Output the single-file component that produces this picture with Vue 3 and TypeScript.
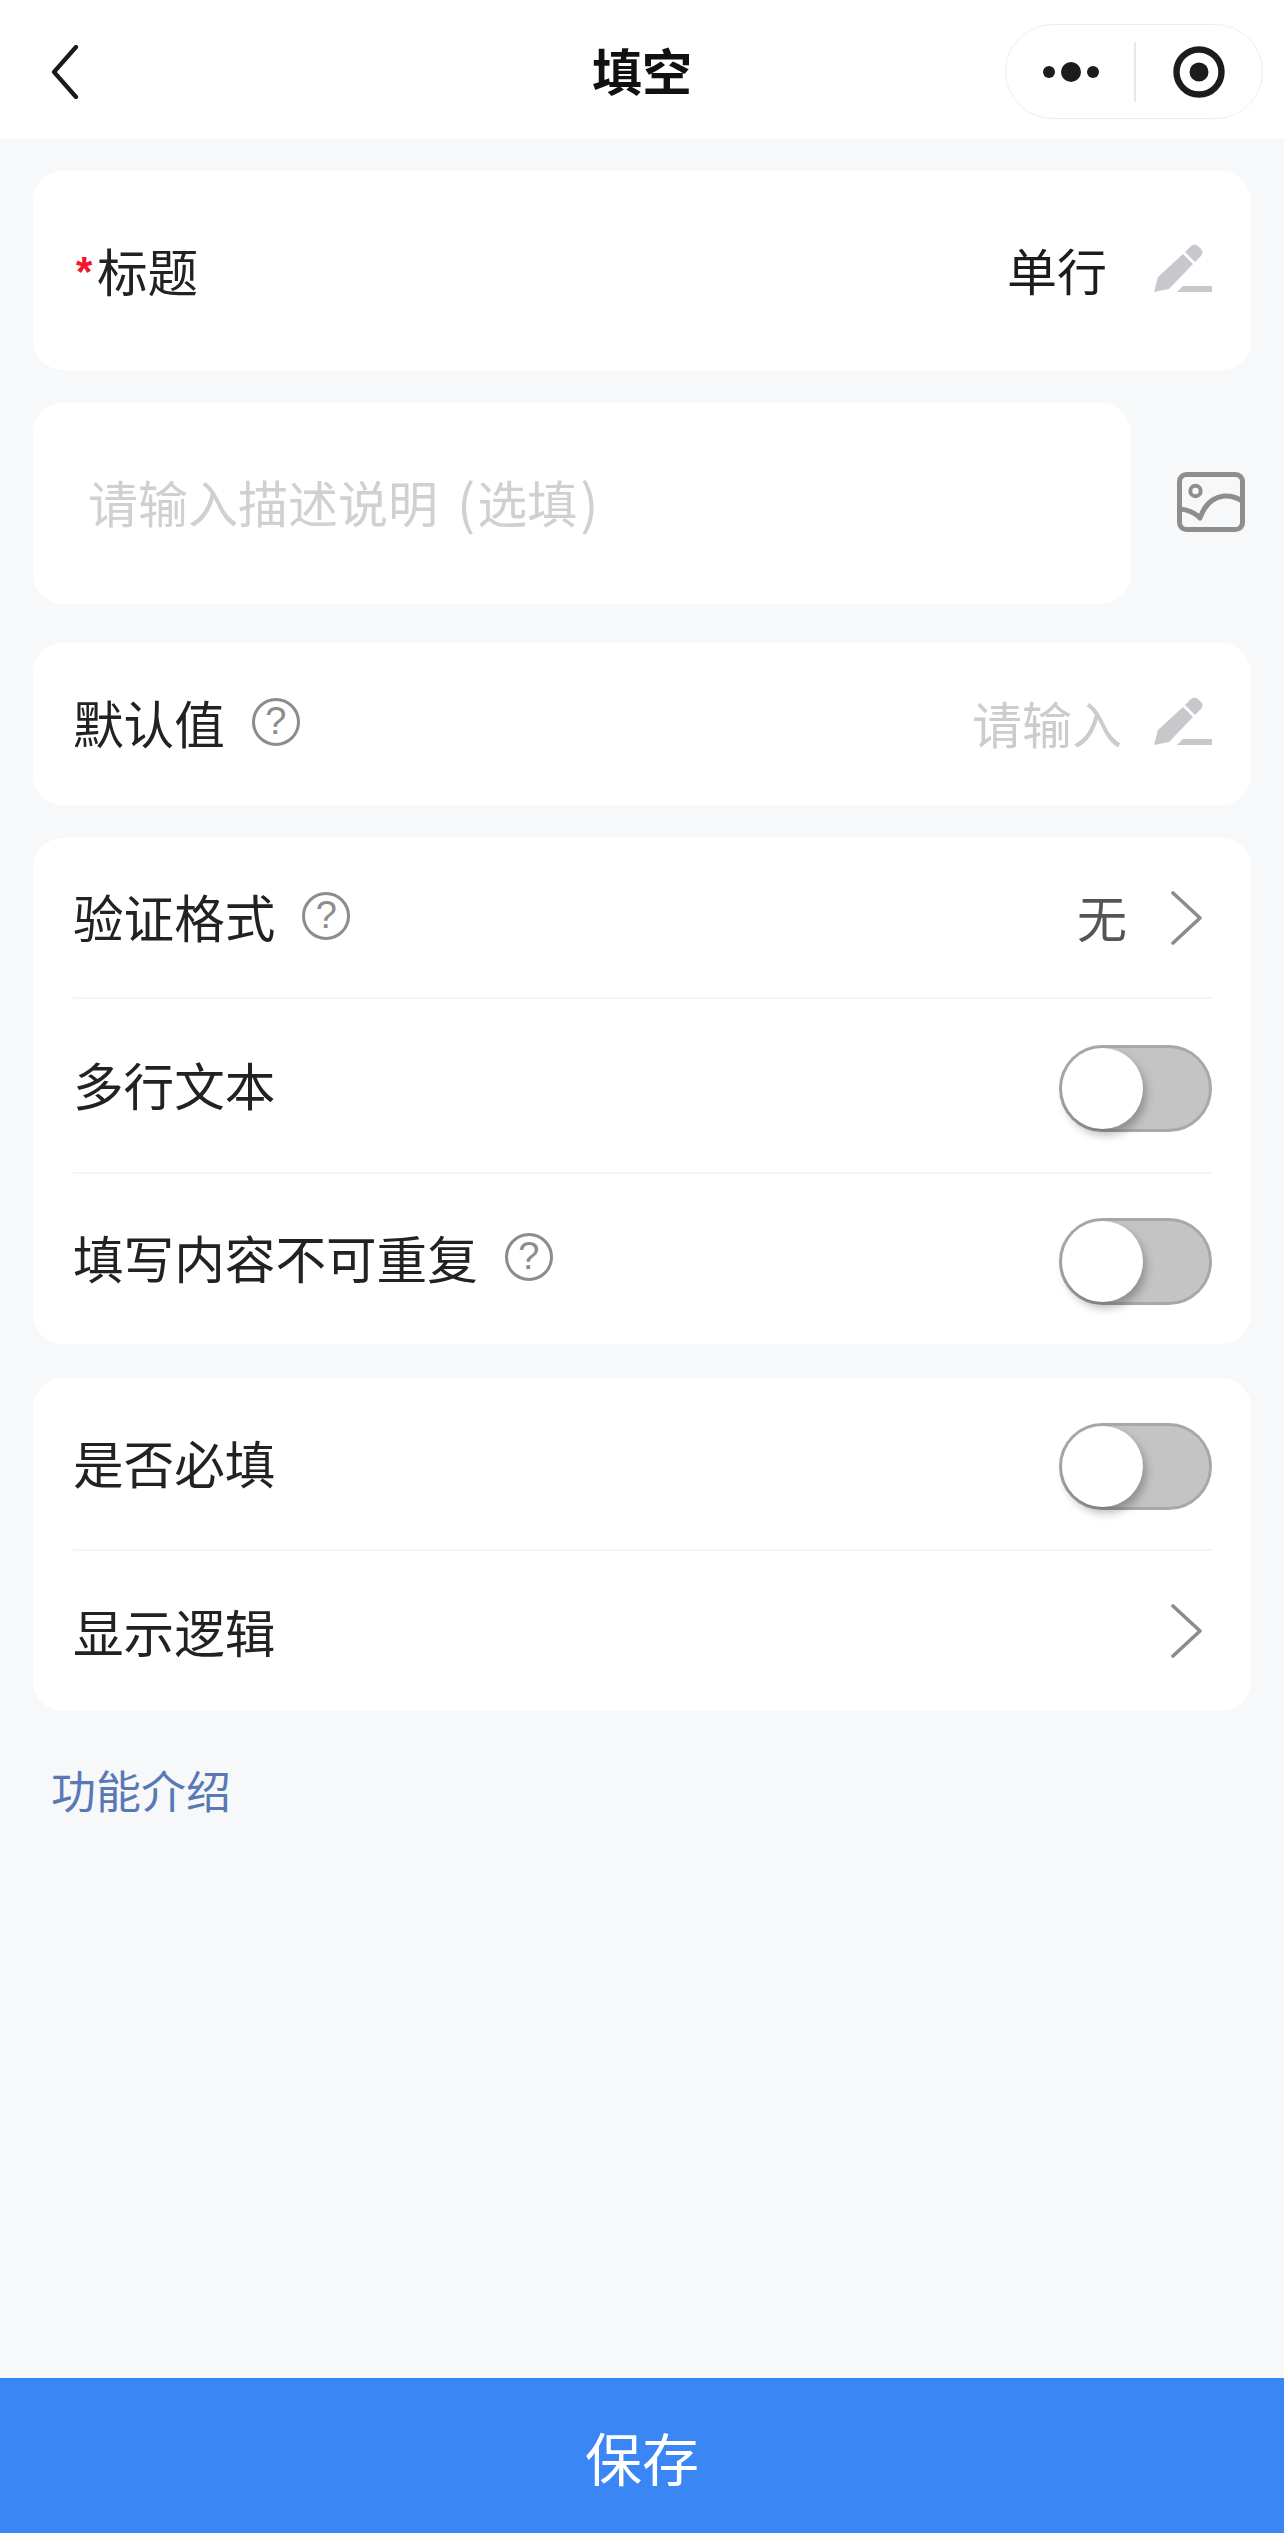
<script setup lang="ts">
const pencil = 'pencil'
</script>

<template>
  <div class="page">
    <header class="nav">
      <svg class="back" width="28" height="54" viewBox="0 0 28 54" fill="none">
        <path d="M25 2 L3 27 L25 52" stroke="#1a1a1a" stroke-width="4.2" stroke-linecap="round" stroke-linejoin="round" />
      </svg>
      <h1 class="nav-title">填空</h1>
      <div class="capsule">
        <svg width="68" height="24" viewBox="0 0 68 24">
          <circle cx="9" cy="12" r="6" fill="#1c1c1c" />
          <circle cx="31" cy="12" r="10" fill="#1c1c1c" />
          <circle cx="53" cy="12" r="6" fill="#1c1c1c" />
        </svg>
        <span class="capsule-line"></span>
        <svg width="52" height="52" viewBox="0 0 52 52">
          <circle cx="26" cy="26" r="22.5" fill="none" stroke="#1c1c1c" stroke-width="6.4" />
          <circle cx="26" cy="26" r="9.5" fill="#1c1c1c" />
        </svg>
      </div>
    </header>

    <main class="content">
      <section class="card title-card">
        <div class="title-label"><span class="star">*</span><span>标题</span></div>
        <span class="value dark">单行</span>
        <svg class="pencil" width="58" height="50" viewBox="0 -1 58 50" :data-icon="pencil">
          <path d="M0 48 L4 33 L29 10 L39 20 L15 45 Z" fill="#c6c8cc" />
          <path d="M31 8 L37 2 Q40 -1 44 2 L47 5 Q50 8 47 12 L41 18 Z" fill="#c6c8cc" />
          <path d="M23 48 L29 42 H58 V48 Z" fill="#c6c8cc" />
        </svg>
      </section>

      <section class="desc-row">
        <div class="card desc">请输入描述说明<span class="paren paren-l">(</span>选填<span class="paren paren-r">)</span></div>
        <svg class="img-icon" width="68" height="60" viewBox="0 0 68 60" fill="none" stroke="#8e8e8e" stroke-width="5">
          <rect x="2.5" y="2.5" width="63" height="55" rx="7" />
          <circle cx="18.5" cy="19" r="5.2" stroke-width="4" />
          <path d="M3 37 Q15 38 23 46 Q30 26 47 24 Q57 23.5 65 29" stroke-linejoin="round" />
        </svg>
      </section>

      <section class="card default-card">
        <span class="label">默认值</span>
        <span class="help">?</span>
        <span class="value placeholder">请输入</span>
        <svg class="pencil" width="58" height="50" viewBox="0 -1 58 50">
          <path d="M0 48 L4 33 L29 10 L39 20 L15 45 Z" fill="#c6c8cc" />
          <path d="M31 8 L37 2 Q40 -1 44 2 L47 5 Q50 8 47 12 L41 18 Z" fill="#c6c8cc" />
          <path d="M23 48 L29 42 H58 V48 Z" fill="#c6c8cc" />
        </svg>
      </section>

      <section class="card group">
        <div class="row row-a line">
          <span class="label">验证格式</span>
          <span class="help">?</span>
          <span class="value muted">无</span>
          <svg class="chevron" width="32" height="54" viewBox="0 0 32 54" fill="none">
            <path d="M2 2 L29 27 L2 52" stroke="#8c8c8c" stroke-width="3.6" stroke-linecap="round" stroke-linejoin="round" />
          </svg>
        </div>
        <div class="row row-b line">
          <span class="label">多行文本</span>
          <span class="switch"><span class="knob"></span></span>
        </div>
        <div class="row row-c">
          <span class="label">填写内容不可重复</span>
          <span class="help">?</span>
          <span class="switch"><span class="knob"></span></span>
        </div>
      </section>

      <section class="card group last-group">
        <div class="row row-d line">
          <span class="label">是否必填</span>
          <span class="switch"><span class="knob"></span></span>
        </div>
        <div class="row row-e">
          <span class="label">显示逻辑</span>
          <svg class="chevron end" width="32" height="54" viewBox="0 0 32 54" fill="none">
            <path d="M2 2 L29 27 L2 52" stroke="#8c8c8c" stroke-width="3.6" stroke-linecap="round" stroke-linejoin="round" />
          </svg>
        </div>
      </section>

      <a class="intro">功能介绍</a>
    </main>

    <footer class="save">保存</footer>
  </div>
</template>

<style>
html, body { margin: 0; padding: 0; background: #f7f8fa; }
</style>

<style scoped>
.page {
  width: 1284px;
  height: 2533px;
  display: flex;
  flex-direction: column;
  background: #f7f8fa;
  font-family: "Noto Sans CJK SC", "Noto Sans", sans-serif;
  color: #222;
  overflow: hidden;
}
.nav {
  height: 138px;
  flex: none;
  background: #fff;
  position: relative;
  display: flex;
  align-items: center;
  justify-content: center;
}
.back { position: absolute; left: 51px; top: 45px; }
.nav-title { margin: 0; font-size: 50px; font-weight: 700; line-height: 1; color: #111; }
.capsule {
  position: absolute;
  left: 1005px;
  top: 24px;
  width: 258px;
  height: 95px;
  box-sizing: border-box;
  border: 1.5px solid #eeeeee;
  border-radius: 48px;
  display: flex;
  align-items: center;
  padding-left: 34px;
}
.capsule-line { width: 1.5px; height: 60px; background: #e8e8e8; margin: 0 37px 0 26px; }
.content { flex: 1; padding: 33px 33px 0; display: flex; flex-direction: column; }
.card { background: #fff; border-radius: 30px; }
.title-card {
  height: 199px;
  display: flex;
  align-items: center;
  padding: 0 39px 0 43px;
}
.title-label { display: flex; align-items: center; font-size: 50.6px; line-height: 1; flex: 1; }
.star { color: #f5142c; font-size: 42px; font-weight: 700; width: 21px; margin-top: 3px; font-family: "Liberation Sans", sans-serif; }
.label { font-size: 50.6px; line-height: 1; color: #222; margin-top: -3px; }
.value { font-size: 50px; line-height: 1; margin-left: auto; margin-top: -4px; }
.dark { color: #1c1c1c; margin-right: 47px; }
.placeholder { color: #cccccc; margin-right: 32px; }
.muted { color: #555; margin-right: 44px; }
.pencil { margin-top: -6px; }
.desc-row { display: flex; align-items: center; margin-top: 33px; }
.desc {
  width: 1098px;
  height: 201px;
  box-sizing: border-box;
  padding: 0 0 6px 55px;
  display: flex;
  align-items: center;
  font-size: 50px;
  color: #d0d0d0;
  white-space: pre;
}
.paren { font-size: 54px; line-height: 1; }
.paren-l { margin-left: 19px; margin-right: 2px; }
.paren-r { margin-left: 3px; }
.img-icon { margin-left: 46px; margin-top: -4px; }
.default-card {
  height: 162px;
  margin-top: 39px;
  display: flex;
  align-items: center;
  padding: 0 39px 0 40px;
}
.help {
  width: 48px;
  height: 48px;
  box-sizing: border-box;
  border: 3.5px solid #8c8c8c;
  border-radius: 50%;
  margin-left: 27px;
  margin-top: -4px;
  color: #8c8c8c;
  font-size: 38px;
  line-height: 41px;
  text-align: center;
  font-family: "Liberation Sans", sans-serif;
}
.group { margin-top: 33px; display: flex; flex-direction: column; }
.row {
  margin: 0 39px 0 40px;
  display: flex;
  align-items: center;
  box-sizing: border-box;
}
.line { border-bottom: 2px solid #f5f5f5; }
.row-a { height: 161px; }
.row-b { height: 175px; }
.row-c { height: 170px; }
.row-d { height: 173px; }
.row-e { height: 160px; }
.row-e .label { margin-top: 1px; }
.last-group { margin-top: 34px; }
.row .switch { margin-left: auto; margin-top: 5px; }
.chevron.end { margin-left: auto; }
.chevron { margin-right: 9px; }
.switch {
  width: 153px;
  height: 87px;
  box-sizing: border-box;
  border: 3px solid #a8a8a8;
  border-radius: 44px;
  background: #c4c4c4;
  position: relative;
  flex: none;
}
.knob {
  position: absolute;
  left: 0;
  top: 0;
  width: 81px;
  height: 81px;
  border-radius: 50%;
  background: #fff;
  box-shadow: 3px 6px 10px rgba(0, 0, 0, 0.28);
}
.intro {
  margin: 56px 0 0 18px;
  font-size: 45px;
  line-height: 1;
  color: #5a78b4;
}
.save {
  flex: none;
  height: 155px;
  background: #3a86f5;
  color: #fff;
  font-size: 57px;
  display: flex;
  align-items: center;
  justify-content: center;
}
</style>
